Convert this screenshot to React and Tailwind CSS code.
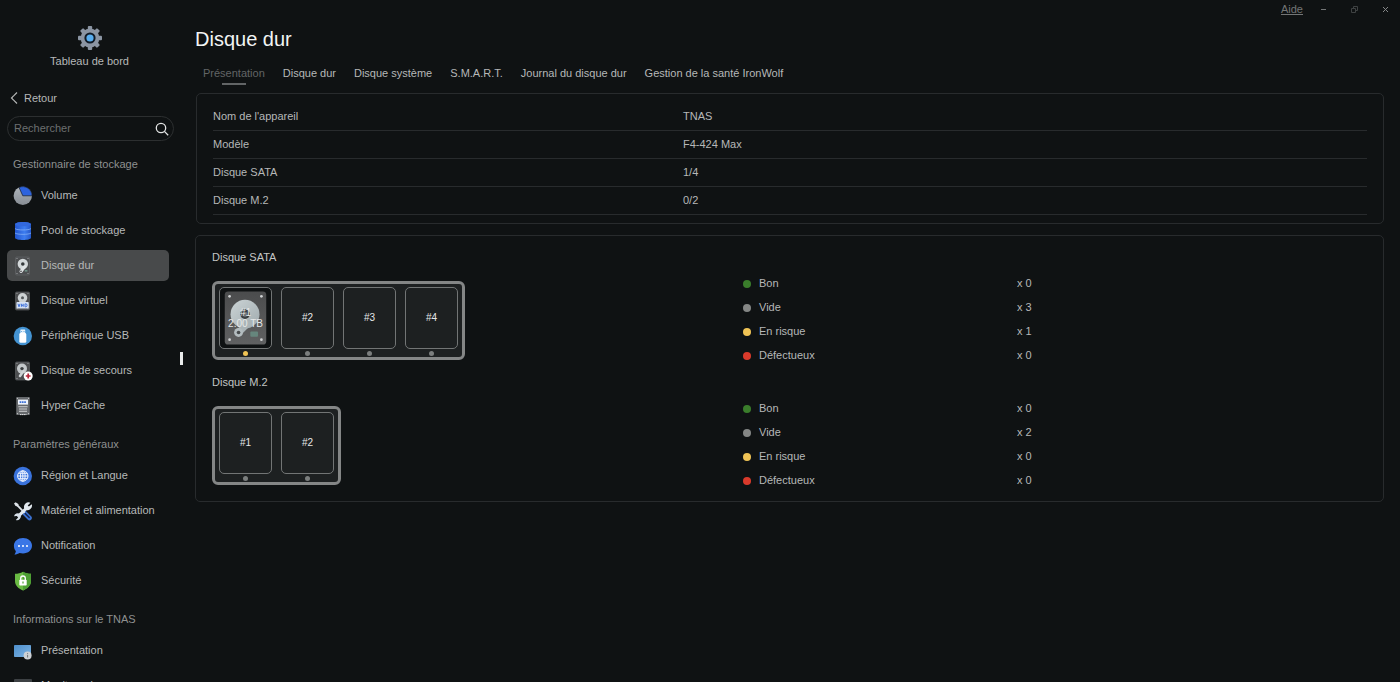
import { useState } from 'react';

function GearIcon() {
  return (
    <svg width="26" height="26" viewBox="0 0 26 26" aria-hidden="true">
      <g fill="#8b95a3">
        <circle cx="13" cy="13" r="9.4" />
        {[0, 45, 90, 135, 180, 225, 270, 315].map((a) => (
          <rect key={a} x="10.8" y="1" width="4.4" height="5" rx="1" transform={`rotate(${a} 13 13)`} />
        ))}
      </g>
      <circle cx="13" cy="13" r="5.6" fill="#101a26" />
      <circle cx="13" cy="13" r="3.6" fill="#58aef0" />
    </svg>
  );
}

function Icon({ children }) {
  return (
    <svg width="20" height="20" viewBox="0 0 20 20" className="shrink-0" aria-hidden="true">
      {children}
    </svg>
  );
}

function VolumeIcon() {
  return (
    <Icon>
      <defs>
        <linearGradient id="vol" x1="0" y1="0" x2="0" y2="1">
          <stop offset="0" stopColor="#aeb4ba" />
          <stop offset="1" stopColor="#878d94" />
        </linearGradient>
      </defs>
      <circle cx="9.8" cy="9.8" r="9.2" fill="url(#vol)" />
      <path d="M9.8 9.8 6 1.400A9.2 9.2 0 0 1 19 9.8Z" fill="#2d63dd" stroke="#151c28" strokeWidth=".7" />
    </Icon>
  );
}

function PoolIcon() {
  return (
    <Icon>
      <defs>
        <linearGradient id="pool" x1="0" y1="0" x2="1" y2="0">
          <stop offset="0" stopColor="#2356cf" />
          <stop offset=".6" stopColor="#3d7df0" />
          <stop offset="1" stopColor="#2557c8" />
        </linearGradient>
      </defs>
      <path d="M2 3.2C2 .2 18 .2 18 3.2v13.6c0 3-16 3-16 0Z" fill="url(#pool)" />
      <ellipse cx="10" cy="3.2" rx="8" ry="2.1" fill="#3268dc" />
      <path d="M2 7.6c1.8 1.8 14.2 1.8 16 0M2 12c1.8 1.8 14.2 1.8 16 0" fill="none" stroke="#82aef5" strokeWidth=".8" />
    </Icon>
  );
}

function DriveBody() {
  return (
    <>
      <rect x="2.5" y="1" width="14" height="18" rx="1.2" fill="#4c4e50" stroke="#66696b" strokeWidth=".6" />
      <g fill="#b9bcbe">
        <circle cx="4" cy="2.6" r=".5" />
        <circle cx="15" cy="2.6" r=".5" />
        <circle cx="4" cy="17.4" r=".5" />
        <circle cx="15" cy="17.4" r=".5" />
      </g>
    </>
  );
}

function DiskIcon() {
  return (
    <Icon>
      <DriveBody />
      <circle cx="9.8" cy="8" r="5.2" fill="#d3d8da" />
      <path d="M11.6 10.5 8 15.5" stroke="#dfe3e5" strokeWidth="3" strokeLinecap="round" />
      <circle cx="9.8" cy="8" r="1.8" fill="#35393b" />
      <circle cx="8" cy="15.4" r=".8" fill="#4c4e50" />
      <rect x="11.8" y="14" width="2.6" height="1.6" fill="#6f8f86" />
    </Icon>
  );
}

function VirtualDiskIcon() {
  return (
    <Icon>
      <DriveBody />
      <circle cx="9.5" cy="6.8" r="4.8" fill="#cdd2d4" />
      <circle cx="9.5" cy="6.8" r="1.5" fill="#53585a" />
      <rect x="3.4" y="11" width="12.4" height="6.4" rx="1" fill="#d6e2f4" />
      <path d="m5 12.8 1 3 1-3M8.4 12.8v3M10.2 12.8v3M8.4 14.3h1.8M12 12.8v3h.6a1.5 1.5 0 0 0 0-3Z" fill="none" stroke="#3268d8" strokeWidth=".9" />
    </Icon>
  );
}

function UsbIcon() {
  return (
    <Icon>
      <circle cx="9.8" cy="10" r="9.2" fill="#4493d2" />
      <rect x="7.4" y="3.6" width="4.8" height="4" rx=".5" fill="#eaf4fc" />
      <rect x="6.3" y="7" width="7" height="9.8" rx="1.4" fill="#fff" />
      <path d="M8.6 5v1M11 5v1" stroke="#4493d2" strokeWidth=".8" />
    </Icon>
  );
}

function RescueDiskIcon() {
  return (
    <Icon>
      <DriveBody />
      <circle cx="9" cy="7.6" r="5" fill="#c3c8ca" />
      <path d="M10.4 10 7 15" stroke="#cfd4d6" strokeWidth="2.6" strokeLinecap="round" />
      <circle cx="9" cy="7.6" r="1.7" fill="#3a3e40" />
      <circle cx="15.2" cy="15" r="4.5" fill="#fff" />
      <path d="M15.2 12.6v4.8M12.8 15h4.8" stroke="#b8263a" strokeWidth="1.7" />
    </Icon>
  );
}

function CacheIcon() {
  return (
    <Icon>
      <rect x="3.2" y="1" width="13.6" height="18" rx=".8" fill="#66696c" />
      <g fill="#c9cccd">
        <circle cx="4.4" cy="2.3" r=".6" />
        <circle cx="15.6" cy="2.3" r=".6" />
        <circle cx="4.4" cy="17.6" r=".6" />
        <circle cx="15.6" cy="17.6" r=".6" />
      </g>
      <rect x="5" y="3.6" width="10" height="5" fill="#eef3fb" />
      <path d="M6.6 6.1h6.8" stroke="#3b6fd6" strokeWidth="1.9" strokeDasharray="1.7 .6" />
      <path d="M5.4 10.7h9.2M6 13h8M6 15.2h8" stroke="#d2d4d5" strokeWidth="1.1" />
      <path d="M7 18.6h6.4" stroke="#e0e2e3" strokeWidth="1" strokeDasharray="1.4 .4" />
    </Icon>
  );
}

function GlobeIcon() {
  return (
    <Icon>
      <circle cx="9.8" cy="10" r="9.2" fill="#3a73dc" />
      <g fill="none" stroke="#eef4ff" strokeWidth="1">
        <circle cx="9.8" cy="10" r="5.2" />
        <ellipse cx="9.8" cy="10" rx="2.3" ry="5.2" />
        <path d="M9.8 4.8v10.4M4.6 10h10.4M5.4 7.3h8.8M5.4 12.7h8.8" />
      </g>
    </Icon>
  );
}

function ToolsIcon() {
  return (
    <Icon>
      <path d="m11.5 12 5 5" stroke="#3a70cf" strokeWidth="4.6" strokeLinecap="round" />
      <path d="m12.2 12.6 4 4" stroke="#14244a" strokeWidth="1.4" strokeLinecap="round" />
      <path d="m3 3 8.6 8.8" stroke="#dde3e8" strokeWidth="1.8" />
      <path d="m1 2.4 1.6-1.2 3 2-.8 2.4-2.2-.6Z" fill="#dde3e8" />
      <path d="M5.2 15.4 14.6 6" stroke="#e3eaf0" strokeWidth="3" />
      <path d="M17.4 1.8 14.7 4.4l1.2 1.2 2.9-2.4a4.6 4.6 0 0 1-6.4 5.5l-1.2-1.3a4.6 4.6 0 0 1 6.2-5.6Z" fill="#e3eaf0" />
      <path d="M1 15.2a4 4 0 0 1 5.8-2.4l1 1.2a4 4 0 0 1-5 5l2.4-2.5-1.4-1.4Z" fill="#d5dfe8" />
    </Icon>
  );
}

function ChatIcon() {
  return (
    <Icon>
      <path d="M10 2c5.2 0 9 3.3 9 7.7s-3.8 7.7-9 7.7c-1.2 0-2.4-.2-3.4-.5-1.3.9-3.2 1.5-5.2 1.5.9-.8 1.400-2 1.400-3.3C1.6 13.7.9 11.8.9 9.7.9 5.3 4.8 2 10 2Z" fill="#3a76e6" />
      <g fill="#fff">
        <circle cx="6" cy="10" r="1" />
        <circle cx="10" cy="10" r="1" />
        <circle cx="14" cy="10" r="1" />
      </g>
    </Icon>
  );
}

function ShieldIcon() {
  return (
    <Icon>
      <path d="M10 .8c2.5 1.4 5.2 2 8 2v7.4c0 4.3-3.5 7.4-8 9.2-4.5-1.8-8-4.9-8-9.2V2.8c2.8 0 5.5-.6 8-2Z" fill="#6abb43" />
      <path d="M10 .8c2.5 1.4 5.2 2 8 2v7.4c0 4.3-3.5 7.4-8 9.2Z" fill="#4d9f33" />
      <rect x="6.3" y="8.7" width="7.4" height="5.8" rx=".8" fill="#fff" />
      <path d="M7.7 8.9V7.3a2.3 2.3 0 0 1 4.6 0v1.6" fill="none" stroke="#fff" strokeWidth="1.3" />
      <path d="M10 10.6v2" stroke="#4d9f33" strokeWidth="1.2" />
    </Icon>
  );
}

function OverviewIcon() {
  return (
    <Icon>
      <defs>
        <linearGradient id="screen" x1="0" y1="0" x2="1" y2="1">
          <stop offset="0" stopColor="#4e8fcc" />
          <stop offset="1" stopColor="#7db4e4" />
        </linearGradient>
      </defs>
      <rect x="1" y="4" width="17" height="12" rx=".8" fill="url(#screen)" />
      <circle cx="14.6" cy="14.4" r="4" fill="#cdd1d5" />
      <path d="M14.6 12.2v.9M14.6 13.9v2.6" stroke="#6d7378" strokeWidth="1" />
    </Icon>
  );
}

function MonitorIcon() {
  return (
    <Icon>
      <rect x="1" y="3" width="18" height="14" rx="1" fill="#3d4144" />
    </Icon>
  );
}

const menu = [
  {
    title: 'Gestionnaire de stockage',
    items: [
      { label: 'Volume', icon: VolumeIcon },
      { label: 'Pool de stockage', icon: PoolIcon },
      { label: 'Disque dur', icon: DiskIcon },
      { label: 'Disque virtuel', icon: VirtualDiskIcon },
      { label: 'Périphérique USB', icon: UsbIcon },
      { label: 'Disque de secours', icon: RescueDiskIcon },
      { label: 'Hyper Cache', icon: CacheIcon },
    ],
  },
  {
    title: 'Paramètres généraux',
    items: [
      { label: 'Région et Langue', icon: GlobeIcon },
      { label: 'Matériel et alimentation', icon: ToolsIcon },
      { label: 'Notification', icon: ChatIcon },
      { label: 'Sécurité', icon: ShieldIcon },
    ],
  },
  {
    title: 'Informations sur le TNAS',
    items: [
      { label: 'Présentation', icon: OverviewIcon },
      { label: 'Moniteur de ressources', icon: MonitorIcon },
    ],
  },
];

const tabs = [
  'Présentation',
  'Disque dur',
  'Disque système',
  'S.M.A.R.T.',
  'Journal du disque dur',
  'Gestion de la santé IronWolf',
];

const deviceInfo = [
  ["Nom de l'appareil", 'TNAS'],
  ['Modèle', 'F4-424 Max'],
  ['Disque SATA', '1/4'],
  ['Disque M.2', '0/2'],
];

const bays = [
  {
    title: 'Disque SATA',
    slots: [{ id: '#1', size: '2.00 TB', risk: true }, { id: '#2' }, { id: '#3' }, { id: '#4' }],
    counts: [0, 3, 1, 0],
  },
  {
    title: 'Disque M.2',
    slots: [{ id: '#1' }, { id: '#2' }],
    counts: [0, 2, 0, 0],
  },
];

const states = [
  { label: 'Bon', dot: 'bg-[#3a7d2b]' },
  { label: 'Vide', dot: 'bg-[#848685]' },
  { label: 'En risque', dot: 'bg-[#efc355]' },
  { label: 'Défectueux', dot: 'bg-[#d93a2b]' },
];

function Sidebar({ active, onSelect }) {
  return (
    <aside className="flex h-full w-[195px] shrink-0 overflow-hidden">
      <div className="min-w-0 flex-1 pl-[7px] pt-[25px]">
        <a href="#dashboard" className="flex flex-col items-center gap-px">
          <GearIcon />
          <span className="leading-[18px]">Tableau de bord</span>
        </a>

        <button type="button" className="mt-[18px] flex h-5 items-center gap-[6px] pl-[3px]">
          <svg width="8" height="14" viewBox="0 0 8 14" fill="none" stroke="#b4b6b6" strokeWidth="1.2" aria-hidden="true">
            <path d="M7 1.5 1.500 7 7 12.5" />
          </svg>
          Retour
        </button>

        <div className="mt-2 flex h-[25px] w-[167px] items-center rounded-full border border-[#2c2f30] pl-[6px] pr-1">
          <input
            type="text"
            aria-label="Rechercher"
            placeholder="Rechercher"
            className="min-w-0 flex-1 bg-transparent outline-none placeholder:text-[#6c6f70]"
          />
          <svg width="14" height="14" viewBox="0 0 14 14" fill="none" stroke="#e2e4e4" strokeWidth="1.3" aria-hidden="true">
            <circle cx="6" cy="6" r="4.7" />
            <path d="m9.400 9.400 3.800 3.800" />
          </svg>
        </div>

        <nav className="mt-[13px]">
          {menu.map((group) => (
            <section key={group.title} className="mb-[13px]">
              <h2 className="mb-[6px] pl-[6px] leading-5 text-[#8e9090]">{group.title}</h2>
              <ul className="flex flex-col gap-1">
                {group.items.map(({ label, icon: ItemIcon }) => (
                  <li key={label}>
                    <button
                      type="button"
                      onClick={() => onSelect(label)}
                      className={`flex h-[31px] w-[162px] items-center gap-2 whitespace-nowrap rounded-[5px] pl-[6px] ${
                        active === label ? 'bg-[#484a4b]' : ''
                      }`}
                    >
                      <ItemIcon />
                      {label}
                    </button>
                  </li>
                ))}
              </ul>
            </section>
          ))}
        </nav>
      </div>

      {/* Resize handle */}
      <div className="flex w-[23px] items-center pl-2 pt-[35px]">
        <div className="h-[13px] w-[3px] bg-[#e9ebeb]" />
      </div>
    </aside>
  );
}

function WindowControls() {
  return (
    <div className="flex h-[18px] items-center justify-end gap-[22px] pr-[10px] text-[#737576]">
      <a href="#aide" className="mr-[-6px] underline">Aide</a>
      <button type="button" aria-label="Réduire">
        <svg width="9" height="9" viewBox="0 0 9 9" stroke="currentColor" aria-hidden="true">
          <path d="M2 4.5h5" />
        </svg>
      </button>
      <button type="button" aria-label="Agrandir" className="text-[#3f4243]">
        <svg width="9" height="9" viewBox="0 0 9 9" fill="none" stroke="currentColor" aria-hidden="true">
          <path d="M1.5 3.5h4v4h-4ZM3.5 3.5v-2h4v4h-2" />
        </svg>
      </button>
      <button type="button" aria-label="Fermer" className="text-[#848687]">
        <svg width="9" height="9" viewBox="0 0 9 9" stroke="currentColor" aria-hidden="true">
          <path d="m2 2 5 5M7 2 2 7" />
        </svg>
      </button>
    </div>
  );
}

function DriveArt() {
  return (
    <svg viewBox="0 0 44 56" className="absolute inset-[3px] h-[54px] w-[45px]" aria-hidden="true">
      <defs>
        <linearGradient id="body" x1="0" y1="0" x2="0" y2="1">
          <stop offset="0" stopColor="#4b4c4d" />
          <stop offset="1" stopColor="#606162" />
        </linearGradient>
        <linearGradient id="platter" x1="0" y1="0" x2="1" y2="1">
          <stop offset="0" stopColor="#ccd4d6" />
          <stop offset="1" stopColor="#9faaad" />
        </linearGradient>
      </defs>
      <rect x=".5" y=".5" width="43" height="55" rx="3.5" fill="url(#body)" />
      <g fill="#cfd1d2">
        <circle cx="5.5" cy="5.5" r="1.4" />
        <circle cx="38.5" cy="5.5" r="1.4" />
        <circle cx="5.5" cy="50.5" r="1.4" />
        <circle cx="38.5" cy="50.5" r="1.4" />
      </g>
      <circle cx="21.5" cy="24" r="15" fill="url(#platter)" />
      <circle cx="21.5" cy="24" r="5" fill="#3b3f42" />
      <circle cx="21.5" cy="24" r="2.6" fill="#70767a" />
      <path d="M25 33 15 43" stroke="#aab4b7" strokeWidth="7" strokeLinecap="round" />
      <circle cx="14.8" cy="43" r="4.6" fill="#b3bcbf" />
      <circle cx="14.8" cy="43" r="1.9" fill="#474b4d" />
      <rect x="27" y="42" width="8" height="5.5" rx="1" fill="#66867d" />
    </svg>
  );
}

function Slot({ slot }) {
  return (
    <div className="flex flex-col items-center gap-[2px]">
      <div
        className={`relative flex h-[62px] w-[53px] flex-col items-center justify-center rounded-[5px] border border-[#727575] text-[10px] leading-[11px] text-[#e6e8e8] ${
          slot.risk ? 'bg-[#0f1213]' : ''
        }`}
      >
        {slot.risk && <DriveArt />}
        <span className="relative">{slot.id}</span>
        {slot.size && <span className="relative whitespace-nowrap">{slot.size}</span>}
      </div>
      <span className={`size-[5px] rounded-full ${slot.risk ? 'bg-[#efc355]' : 'bg-[#7b7e7e]'}`} />
    </div>
  );
}

function BaySection({ bay }) {
  return (
    <section className="flex">
      <div className="w-[531px] shrink-0">
        <h3 className="leading-5 text-[#c3c5c5]">{bay.title}</h3>
        <div className="mt-[14px] flex h-[79px] w-fit gap-[9px] rounded-[6px] border-3 border-[#848686] bg-[#1d2021] px-1 pt-[3px]">
          {bay.slots.map((slot) => (
            <Slot key={slot.id} slot={slot} />
          ))}
        </div>
      </div>
      <ul className="flex flex-col gap-1 pt-[27px]">
        {states.map((state, i) => (
          <li key={state.label} className="flex h-5 items-center">
            <span className={`mr-2 size-2 rounded-full ${state.dot}`} />
            <span className="w-[258px]">{state.label}</span>
            <span>x {bay.counts[i]}</span>
          </li>
        ))}
      </ul>
    </section>
  );
}

export default function App() {
  const [active, setActive] = useState('Disque dur');
  const [tab, setTab] = useState(tabs[0]);

  return (
    <div className="flex h-screen overflow-hidden bg-[#0f1213] font-['Liberation_Sans',Arial,sans-serif] text-[11px] text-[#b6b8b8]">
      <Sidebar active={active} onSelect={setActive} />

      <main className="min-w-0 flex-1">
        <WindowControls />
        <div className="pr-4">
          <h1 className="mt-[7px] text-[20px] leading-7 text-[#f2f4f4]">Disque dur</h1>

          <div role="tablist" className="mt-[10px] flex gap-[18px] pl-2">
            {tabs.map((name) => (
              <button
                key={name}
                type="button"
                role="tab"
                aria-selected={tab === name}
                onClick={() => setTab(name)}
                className={`flex flex-col items-center whitespace-nowrap leading-5 ${tab === name ? 'text-[#626566]' : ''}`}
              >
                {name}
                <span className={`h-[2px] w-6 ${tab === name ? 'bg-[#626566]' : ''}`} />
              </button>
            ))}
          </div>

          <div className="ml-px mt-2 rounded-[5px] border border-[#282b2d] px-4 py-2">
            <table className="w-full table-fixed text-left">
              <tbody>
                {deviceInfo.map(([label, value]) => (
                  <tr key={label} className="h-[28px] border-b border-[#282b2d]">
                    <th scope="row" className="w-[470px] font-normal">{label}</th>
                    <td>{value}</td>
                  </tr>
                ))}
              </tbody>
            </table>
          </div>

          <div className="mt-[11px] flex flex-col gap-[6px] rounded-[5px] border border-[#282b2d] px-4 pb-[10px] pt-[11px]">
            {bays.map((bay) => (
              <BaySection key={bay.title} bay={bay} />
            ))}
          </div>
        </div>
      </main>
    </div>
  );
}
